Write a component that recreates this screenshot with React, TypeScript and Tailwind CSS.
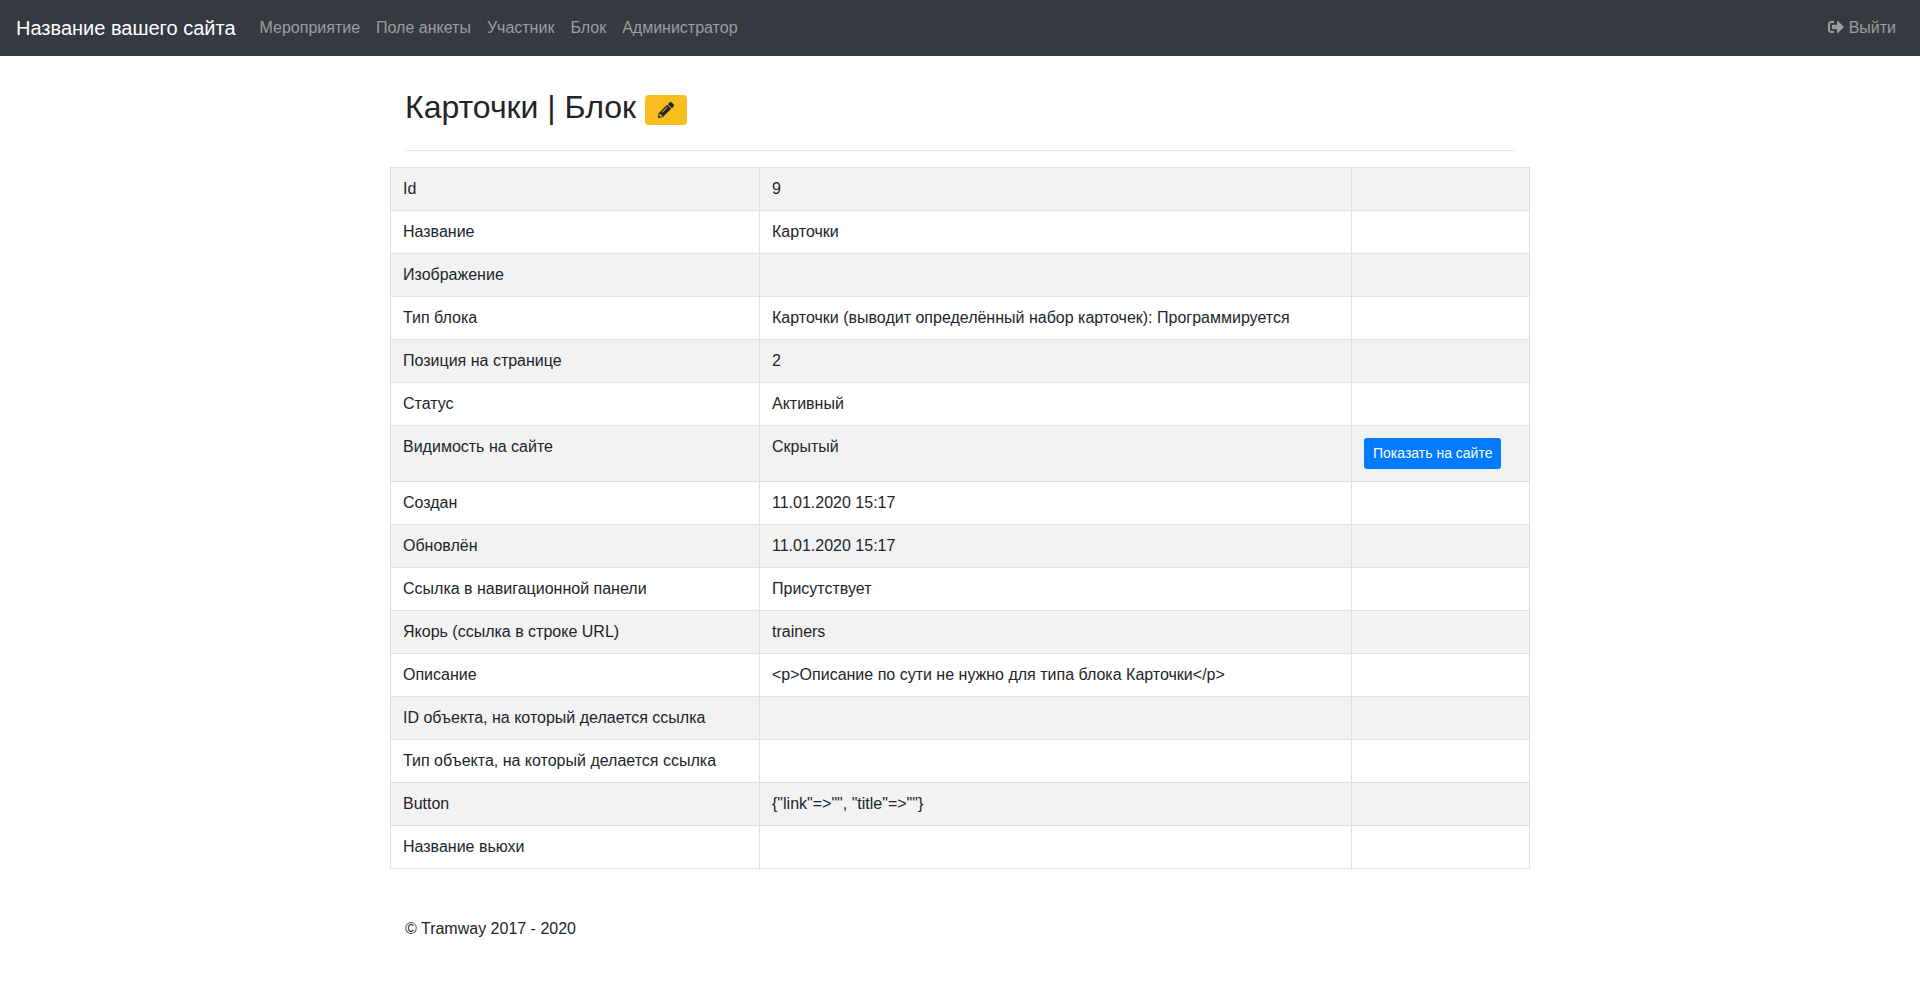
import React from "react";
import { FaPencilAlt, FaSignOutAlt } from "react-icons/fa";

const navItems = ["Мероприятие", "Поле анкеты", "Участник", "Блок", "Администратор"];

const rows: [string, string, string?][] = [
  ["Id", "9"],
  ["Название", "Карточки"],
  ["Изображение", ""],
  ["Тип блока", "Карточки (выводит определённый набор карточек): Программируется"],
  ["Позиция на странице", "2"],
  ["Статус", "Активный"],
  ["Видимость на сайте", "Скрытый", "Показать на сайте"],
  ["Создан", "11.01.2020 15:17"],
  ["Обновлён", "11.01.2020 15:17"],
  ["Ссылка в навигационной панели", "Присутствует"],
  ["Якорь (ссылка в строке URL)", "trainers"],
  ["Описание", "<p>Описание по сути не нужно для типа блока Карточки</p>"],
  ["ID объекта, на который делается ссылка", ""],
  ["Тип объекта, на который делается ссылка", ""],
  ["Button", '{"link"=>"", "title"=>""}'],
  ["Название вьюхи", ""],
];

const cell = "border border-[#dee2e6] p-3 align-top";

export default function App() {
  return (
    <div className="min-h-screen bg-white font-['Liberation_Sans',sans-serif] text-base leading-6 text-[#212529]">
      <nav className="flex h-14 items-center bg-[#343a40] px-4 text-white/50">
        <a href="#" className="mr-4 text-xl leading-[30px] text-white">Название вашего сайта</a>
        <ul className="flex flex-1">
          {navItems.map((item) => (
            <li key={item}>
              <a href="#" className="block p-2">{item}</a>
            </li>
          ))}
        </ul>
        <a href="#" className="flex items-center gap-[5px] p-2">
          <FaSignOutAlt className="mb-0.5 size-4" />
          Выйти
        </a>
      </nav>

      <main className="mx-auto w-[1140px]">
        <header className="mx-[15px] flex h-[95px] items-start border-b border-black/10 pt-8">
          <h2 className="mr-[9px] text-[32px] leading-[38px]">Карточки | Блок</h2>
          <button className="mt-[7px] flex h-[30px] w-[42px] items-center justify-center rounded bg-[#f8be20] text-[#212529]">
            <FaPencilAlt className="size-4" />
          </button>
        </header>

        <table className="mt-4 w-full table-fixed border-collapse">
          <colgroup>
            <col className="w-[369px]" />
            <col className="w-[592px]" />
            <col className="w-[178px]" />
          </colgroup>
          <tbody>
            {rows.map(([label, value, action]) => (
              <tr key={label} className="h-[43px] odd:bg-black/5">
                <td className={cell + " py-[9px]"}>{label}</td>
                <td className={cell + " py-[9px]"}>{value}</td>
                <td className={cell + " py-0"}>
                  {action && (
                    <button className="my-3 flex h-[31px] items-center whitespace-nowrap rounded-[3px] bg-[#007bff] px-[9px] pb-0.5 text-sm text-white">
                      {action}
                    </button>
                  )}
                </td>
              </tr>
            ))}
          </tbody>
        </table>

        <footer className="mx-[15px] mt-12">© Tramway 2017 - 2020</footer>
      </main>
    </div>
  );
}
